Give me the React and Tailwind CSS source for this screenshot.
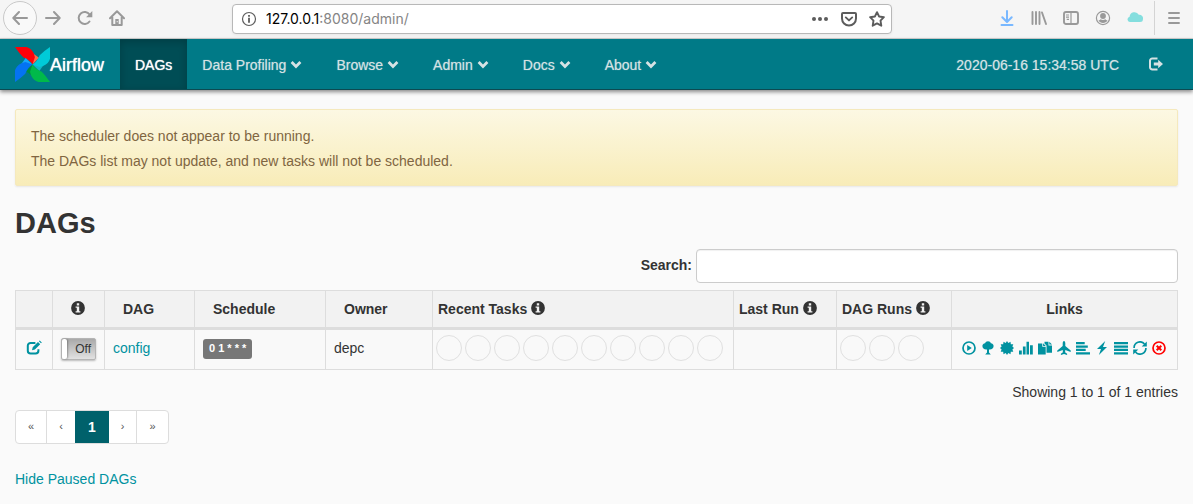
import React from "react";

function Glyph({ children, className = "size-3.5", box = "0 0 14 14" }) {
  return (
    <svg viewBox={box} className={`${className} shrink-0`} fill="currentColor" aria-hidden="true">
      {children}
    </svg>
  );
}

const line = { fill: "none", stroke: "currentColor" };

function InfoIcon() {
  return (
    <Glyph className="inline-block size-3.5 align-[-1px]">
      <path
        fillRule="evenodd"
        d="M7 .1a6.900 6.900 0 1 1 0 13.800A6.900 6.900 0 0 1 7 .1ZM5.800 2.300v2.200h2.400v-2.200ZM4.600 5.500v1.200h1.200v3.600H4.600v1.300h4.800v-1.300H8.200V5.500Z"
      />
    </Glyph>
  );
}

function Chevron() {
  return (
    <Glyph>
      <path d="M1.600 5.100 3.600 3.100 7 6.500l3.400-3.400 2 2L7 10.500Z" />
    </Glyph>
  );
}

function EditIcon() {
  return (
    <Glyph className="size-4" box="0 0 16 16">
      <path {...line} strokeWidth="2" d="M9.400 3H4.600A2.800 2.800 0 0 0 1.800 5.800v5A2.800 2.800 0 0 0 4.600 13.600h5A2.800 2.800 0 0 0 12.400 10.800V9.200" />
      <path d="m6 10.300.7-3L12 2l2.200 2.200-5.300 5.300ZM12.900 1.200l.8-.8 2.100 2.100-.8.8Z" />
    </Glyph>
  );
}

const pinwheel = [
  { turn: "rotate(0 51 51)", main: "#ff0008", fold: "#ff6a4a" },
  { turn: "rotate(90 51 51)", main: "#00cbd8", fold: "#12b5c4" },
  { turn: "rotate(180 51 51)", main: "#00b94a", fold: "#008f3c" },
  { turn: "rotate(270 51 51)", main: "#0473f2", fold: "#17a5fa" },
];

function Logo() {
  return (
    <svg viewBox="0 0 102 102" className="size-[35px] shrink-0" aria-hidden="true">
      {pinwheel.map((p) => (
        <g key={p.turn} transform={p.turn}>
          <path fill={p.fold} d="M51 51 52 18 70 31Z" />
          <path fill={p.main} d="M0 0H34Q48 4 55 19L58 30 51 51Q44 38 24 30Q12 18 0 0Z" />
        </g>
      ))}
    </svg>
  );
}

function ToolButton({ label, className = "", children }) {
  return (
    <button type="button" aria-label={label} className={`flex h-8 w-8 shrink-0 items-center justify-center ${className}`}>
      {children}
    </button>
  );
}

function BrowserBar() {
  return (
    <header className="flex h-[39px] items-center border-b border-[#d0d0d0] bg-[#f5f5f5] px-[3px] pb-0.5 text-[#999]">
      <button type="button" aria-label="Back" className="flex size-[34px] shrink-0 items-center justify-center rounded-full border border-[#c9c9c9] bg-[#f9f9f9]">
        <Glyph className="size-4" box="0 0 16 16">
          <path {...line} strokeWidth="2" strokeLinecap="round" strokeLinejoin="round" d="M15 8H1.500M7 2 1.300 8 7 14" />
        </Glyph>
      </button>
      <ToolButton label="Forward">
        <Glyph className="size-4" box="0 0 16 16">
          <path {...line} strokeWidth="2" strokeLinecap="round" strokeLinejoin="round" d="M1 8h13.500M9 2l5.700 6L9 14" />
        </Glyph>
      </ToolButton>
      <ToolButton label="Reload">
        <Glyph className="size-4" box="0 0 16 16">
          <path {...line} strokeWidth="2" strokeLinecap="round" d="M12.500 11.500A6 6 0 1 1 12.600 4.500" />
          <path d="M15.300 1v6.200H9.100Z" />
        </Glyph>
      </ToolButton>
      <ToolButton label="Home">
        <Glyph className="size-4" box="0 0 16 16">
          <path {...line} strokeWidth="2" strokeLinecap="round" strokeLinejoin="round" d="M1 8.200 8 1.300l7 6.900M3.300 7v8h9.400V7" />
          <path d="M6.300 9h3.400v6H6.300Z" />
          <path fill="#f5f5f5" d="M7.700 11h1v1.300h-1Z" />
        </Glyph>
      </ToolButton>
      <div className="mx-[99px] mt-px flex h-[30px] min-w-0 flex-1 items-center rounded border border-[#b8b8b8] bg-white px-2 text-[#5c5c5c] shadow-[0_1px_3px_rgba(0,0,0,0.06)]">
        <Glyph className="size-4" box="0 0 16 16">
          <circle {...line} cx="8" cy="8" r="6.500" strokeWidth="1.200" />
          <path d="M7.100 4h1.800v1.700H7.100ZM7.100 6.800h1.800v5H7.100Z" />
        </Glyph>
        <a href="#admin" className="ml-[9px] flex-1 truncate font-['Inter',sans-serif] text-sm text-[#858585]">
          <span className="text-black">127.0.0.1</span>:8080/admin/
        </a>
        <div className="flex items-center gap-3 pr-[-2px]">
          <button type="button" aria-label="Page actions">
            <Glyph className="size-[18px]" box="0 0 18 18">
              <circle cx="3" cy="9" r="2" />
              <circle cx="9" cy="9" r="2" />
              <circle cx="15" cy="9" r="2" />
            </Glyph>
          </button>
          <button type="button" aria-label="Save to Pocket">
            <Glyph className="size-4" box="0 0 16 16">
              <path {...line} strokeWidth="2" strokeLinejoin="round" d="M2 2h12a1 1 0 0 1 1 1v4.500a7 7 0 0 1-14 0V3a1 1 0 0 1 1-1Z" />
              <path {...line} strokeWidth="1.900" strokeLinecap="round" strokeLinejoin="round" d="m4.800 6.400 3.200 3 3.200-3" />
            </Glyph>
          </button>
          <button type="button" aria-label="Bookmark" className="-mr-0.5">
            <Glyph className="size-4" box="0 0 16 16">
              <path {...line} strokeWidth="1.900" strokeLinejoin="round" d="m8 1.200 2.100 4.300 4.800.7-3.400 3.500.8 5L8 12.400l-4.300 2.300.8-5L1.100 6.200l4.800-.7Z" />
            </Glyph>
          </button>
        </div>
      </div>
      <ToolButton label="Downloads" className="text-[#79b8ff]">
        <Glyph className="size-4" box="0 0 16 16">
          <path {...line} strokeWidth="2" strokeLinecap="round" strokeLinejoin="round" d="M8 1v10.500M3.300 7.300 8 12l4.700-4.700M2.500 15h11" />
        </Glyph>
      </ToolButton>
      <ToolButton label="Library">
        <Glyph className="size-4" box="0 0 16 16">
          <path {...line} strokeWidth="1.900" strokeLinecap="round" d="M1.500 2v12M5 2v12M8.500 2v12M11 2.500 15 14" />
        </Glyph>
      </ToolButton>
      <ToolButton label="Sidebars">
        <Glyph className="size-4" box="0 0 16 16">
          <rect {...line} x="1" y="2" width="14" height="12" rx="2" strokeWidth="1.900" />
          <path {...line} strokeWidth="1.200" d="M8 2v12M3 5h3M3 7.200h3M3.700 9.400H6" />
        </Glyph>
      </ToolButton>
      <ToolButton label="Account">
        <Glyph className="size-4" box="0 0 16 16">
          <circle {...line} cx="8" cy="8" r="6.600" strokeWidth="1.200" />
          <circle cx="8" cy="6" r="2.900" />
          <path d="M3.500 10.200c1 0 1.700-.5 2.200-1 1.300.9 3.300.9 4.600 0 .5.5 1.200 1 2.200 1-.8 1.700-2.500 2.800-4.500 2.800s-3.700-1.100-4.500-2.800Z" />
        </Glyph>
      </ToolButton>
      <ToolButton label="Cloud" className="text-[#84dede]">
        <Glyph className="size-4" box="0 0 16 16">
          <path d="M2.800 12A2.700 2.700 0 0 1 2.600 6.700 4.900 4.900 0 0 1 11.800 4.800 3.700 3.700 0 0 1 15.900 9.500Q15.900 12 13 12Z" />
        </Glyph>
      </ToolButton>
      <div className="ml-[3px] h-[34px] w-px bg-[#d4d4d4]" />
      <ToolButton label="Menu" className="ml-[3px]">
        <Glyph className="size-4" box="0 0 16 16">
          <path {...line} strokeWidth="1.900" strokeLinecap="round" d="M3 3h10M3 8h10M3 13h10" />
        </Glyph>
      </ToolButton>
    </header>
  );
}

const menus = ["Data Profiling", "Browse", "Admin", "Docs", "About"];

function NavBar() {
  return (
    <nav className="flex h-[51px] border-b border-[#0c4a52] bg-[#007a87] text-sm text-[#d5e2e4] shadow-[0_2px_4px_rgba(0,0,0,0.45)]">
      <a href="#home" className="flex w-[120px] shrink-0 items-center pl-[15px] text-lg text-white [text-shadow:0_0_1px_#fff]">
        <Logo />
        <span className="pt-0.5">Airflow</span>
      </a>
      <a href="#dags" className="flex items-center bg-[#004d55] px-[15px] pt-0.5 text-white shadow-[inset_0_3px_9px_rgba(0,0,0,0.2)] [text-shadow:0_0_1px_#fff]">
        DAGs
      </a>
      {menus.map((name) => (
        <button key={name} type="button" className="flex items-center gap-[3px] pt-0.5 pr-[18px] pl-[15px] whitespace-nowrap [text-shadow:0_0_1px_rgba(213,226,228,0.6)]">
          {name}
          <Chevron />
        </button>
      ))}
      <span className="ml-auto flex items-center px-[15px] pt-0.5 whitespace-nowrap [text-shadow:0_0_1px_rgba(213,226,228,0.6)]">2020-06-16 15:34:58 UTC</span>
      <a href="#logout" aria-label="Log out" className="mr-[15px] flex items-center px-[15px]">
        <Glyph>
          <path {...line} strokeWidth="2" d="M8.500 1.500H3.300A2.300 2.300 0 0 0 1 3.800v6.400A2.300 2.300 0 0 0 3.300 12.500h5.200" />
          <path d="M4.800 5.600h4.400V2.800L14 7l-4.800 4.200V8.400H4.800Z" />
        </Glyph>
      </a>
    </nav>
  );
}

const actions = [
  ["Trigger Dag", <g key="g"><circle {...line} cx="7" cy="7" r="6" strokeWidth="1.700" /><path d="M5.200 4 9.800 7l-4.600 3Z" /></g>],
  ["Tree View", <path key="g" d="M7 .2c1.500 0 2.600.8 2.900 2 1.700.2 2.700 1.300 2.700 2.800 0 2-1.600 3.600-3.800 3.600H8v3l1.800 2H4.200l1.800-2v-3h-.8C3 8.600 1.400 7 1.400 5c0-1.500 1-2.600 2.700-2.800C4.400 1 5.500.2 7 .2Z" />],
  ["Graph View", <path key="g" d="m7 0 1.300 2L10.500.8l.3 2.400 2.500.1-.9 2.200L14 7l-1.600 1.500.9 2.200-2.500.1-.3 2.400L8.300 12 7 14l-1.300-2-2.200 1.200-.3-2.400-2.500-.1.900-2.200L0 7l1.600-1.500L.7 3.300l2.500-.1L3.500.8 5.700 2Z" />],
  ["Tasks Duration", <path key="g" d="M0 9.500h2.800v4H0ZM3.900 5.500h2.700v8H3.900ZM7.500.7h2.500v12.800H7.500ZM11 4.200h2.800v9.300H11Z" />],
  ["Task Tries", <path key="g" d="M0 2.500h4.300v3.300h3.400v7.700H0ZM5.100 2.200l2.700 2.900H5.100ZM6.500.7h4v3.800H14v7.200H8.500V4.600L6.500 2.600ZM11.300.7 14 3.500h-2.700Z" />],
  ["Landing Times", <path key="g" d="M7 0c.8 0 1.300 1.100 1.300 2.500v2.600l5.400 4.400v1.600L8.300 9l-.2 2.200 2 1.500v1.200L7 13l-3.100.9v-1.200l2-1.500L5.700 9 .3 11.100V9.500l5.400-4.400V2.500C5.700 1.100 6.200 0 7 0Z" />],
  ["Gantt View", <path key="g" d="M0 1h8.700v2.300H0ZM0 4.400h11.800v2.300H0ZM0 7.800h9.700v2.300H0ZM0 11.200h14v2.300H0Z" />],
  ["Code View", <path key="g" d="M10.200 0 2 8h4L3.900 14 12 6H8Z" />],
  ["Logs", <path key="g" d="M0 1h14v2.300H0ZM0 4.400h14v2.300H0ZM0 7.800h14v2.300H0ZM0 11.200h14v2.300H0Z" />],
  ["Refresh", <g key="g"><path {...line} strokeWidth="1.700" d="M1.100 7A5.900 5.900 0 0 1 11.500 3M12.900 7A5.900 5.900 0 0 1 2.500 11" /><path d="M13.800.4v5.100H8.700ZM.2 13.600V8.500h5.100Z" /></g>],
  ["Delete Dag", <g key="g"><circle {...line} cx="7" cy="7" r="6" strokeWidth="1.700" /><path {...line} strokeWidth="2" d="m4.700 4.700 4.600 4.600M9.300 4.700 4.700 9.300" /></g>],
];

function Circles({ count }) {
  return (
    <div className="flex gap-[3px]">
      {Array.from({ length: count }, (_, i) => (
        <span key={i} className="size-[26px] rounded-full border border-[#e0e0e0]" />
      ))}
    </div>
  );
}

function DagTable() {
  const th = "border border-[#ddd] border-b-[3px] text-left font-bold whitespace-nowrap";
  const td = "border border-[#ddd] pb-[3px]";
  return (
    <table className="mt-[7px] w-full table-fixed border-collapse bg-[#f9f9f9]">
      <colgroup>
        <col className="w-[37px]" />
        <col className="w-[52px]" />
        <col />
        <col className="w-[131px]" />
        <col className="w-[107px]" />
        <col className="w-[301px]" />
        <col className="w-[103px]" />
        <col className="w-[115px]" />
        <col className="w-[226px]" />
      </colgroup>
      <thead>
        <tr className="h-[38px] bg-[#f2f2f2]">
          <th className={th} aria-label="Edit" />
          <th className={`${th} pl-[18px]`}><InfoIcon /></th>
          <th className={`${th} pl-[18px]`}>DAG</th>
          <th className={`${th} pl-[18px]`}>Schedule</th>
          <th className={`${th} pl-[18px]`}>Owner</th>
          <th className={`${th} pl-[5px]`}>Recent Tasks <InfoIcon /></th>
          <th className={`${th} pl-[5px]`}>Last Run <InfoIcon /></th>
          <th className={`${th} pl-[5px]`}>DAG Runs <InfoIcon /></th>
          <th className="border border-b-[3px] border-[#ddd] text-center font-bold">Links</th>
        </tr>
      </thead>
      <tbody>
        <tr className="h-[41px]">
          <td className={td}>
            <a href="#edit" aria-label="Edit DAG" className="flex justify-center text-[#0092a0]"><EditIcon /></a>
          </td>
          <td className={`${td} pl-2`}>
            <button type="button" role="switch" aria-checked="false" aria-label="config" className="mt-0.5 flex h-[22px] w-[35px] items-stretch rounded-xs border border-[#b5b5b5] bg-linear-to-b from-[#a9a9a9] to-[#e2e2e2] text-xs text-[#333] shadow-[0_1px_2px_rgba(0,0,0,0.25)]">
              <span className="w-[5px] rounded-xs bg-white shadow-[1px_0_2px_rgba(0,0,0,0.3)]" />
              <span className="flex flex-1 items-center justify-end pr-1">Off</span>
            </button>
          </td>
          <td className={`${td} pl-2`}><a href="#config" className="text-[#0092a0]">config</a></td>
          <td className={`${td} pl-2`}>
            <a href="#schedule" className="mt-0.5 inline-flex h-5 items-center rounded-[3px] bg-[#777] px-1.5 align-middle text-[11px] font-bold text-white">0 1 * * *</a>
          </td>
          <td className={`${td} pl-2`}>depc</td>
          <td className={`${td} pl-[3px]`}><Circles count={10} /></td>
          <td className={td} />
          <td className={`${td} pl-[3px]`}><Circles count={3} /></td>
          <td className={`${td} pr-0.5`}>
            <div className="flex justify-center gap-[5px]">
              {actions.map(([label, icon]) => (
                <a key={label} href="#action" aria-label={label} className={label === "Delete Dag" ? "text-[#f00]" : "text-[#0092a0]"}>
                  <Glyph>{icon}</Glyph>
                </a>
              ))}
            </div>
          </td>
        </tr>
      </tbody>
    </table>
  );
}

function Pagination() {
  const item = "flex h-full items-center justify-center text-[11px] text-[#555]";
  return (
    <nav aria-label="Pages" className="mt-2 flex">
      <div className="flex h-[34px] overflow-hidden rounded border border-[#ddd] bg-white">
        <button type="button" className={`${item} w-[31px] border-r border-[#ddd]`}>«</button>
        <button type="button" className={`${item} w-7`}>‹</button>
        <button type="button" aria-current="page" className="-my-px flex w-[34px] items-center justify-center bg-[#00616b] text-sm font-bold text-white">1</button>
        <button type="button" className={`${item} w-7 border-r border-[#ddd]`}>›</button>
        <button type="button" className={`${item} w-[31px]`}>»</button>
      </div>
    </nav>
  );
}

export default function App() {
  return (
    <div className="min-h-screen bg-[#fafafa] font-['Liberation_Sans',Arial,sans-serif] text-sm text-[#333]">
      <BrowserBar />
      <NavBar />
      <main className="px-[15px] pt-[19px] pb-4">
        <div role="alert" className="rounded-xs border border-[#f5e9bd] bg-linear-to-b from-[#fcf8e3] to-[#f8ecb8] px-[15px] pt-[14px] pb-[11px] leading-[25px] text-[#806541] shadow-[0_1px_2px_rgba(0,0,0,0.08)]">
          <p>The scheduler does not appear to be running.</p>
          <p>The DAGs list may not update, and new tasks will not be scheduled.</p>
        </div>
        <h1 className="mt-[17px] text-[29px] leading-10 font-bold">DAGs</h1>
        <div className="mt-[6px] flex items-center justify-end gap-1">
          <label htmlFor="search" className="pb-0.5 font-bold">Search:</label>
          <input id="search" type="search" className="h-[34px] w-[482px] rounded border border-[#ccc] bg-white px-3 shadow-[inset_0_1px_1px_rgba(0,0,0,0.06)] outline-none" />
        </div>
        <DagTable />
        <p className="mt-3 text-right leading-5">Showing 1 to 1 of 1 entries</p>
        <Pagination />
        <a href="#paused" className="mt-[25px] inline-block leading-5 text-[#0092a0]">Hide Paused DAGs</a>
      </main>
    </div>
  );
}
